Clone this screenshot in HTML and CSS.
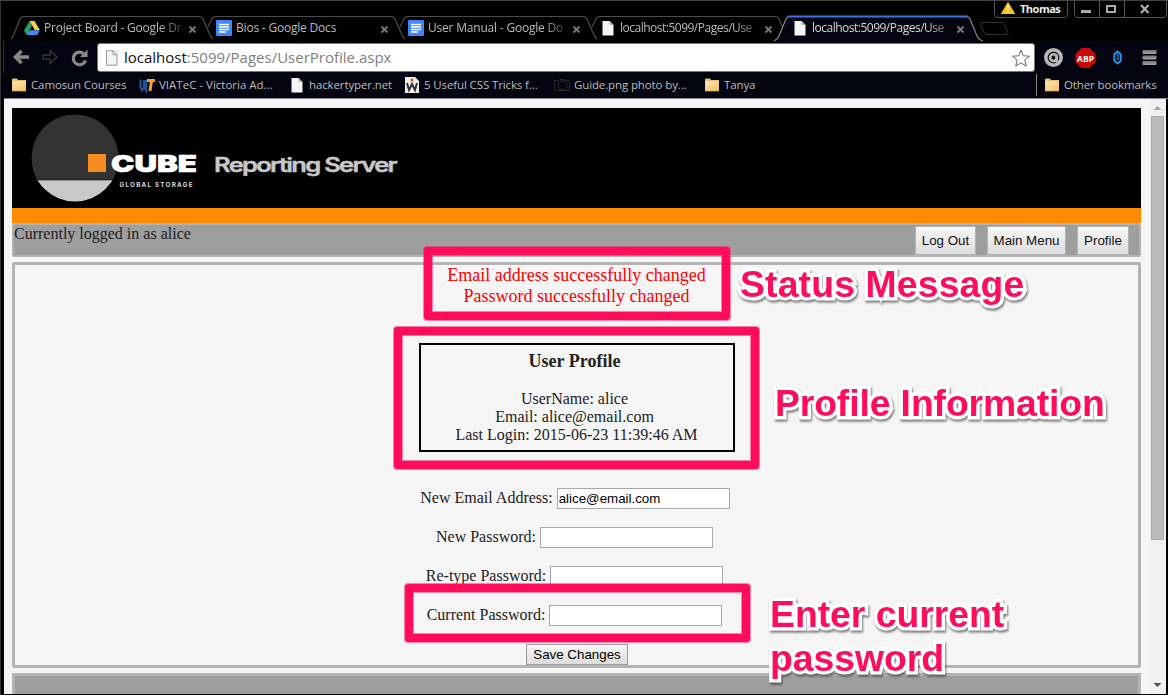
FILE: index.html
```
<!DOCTYPE html>
<html lang="en">
<head>
<meta charset="utf-8">
<title>User Profile</title>
<link rel="stylesheet" href="styles.css">
</head>
<body>
<svg class="defs" width="0" height="0">
  <defs>
    <linearGradient id="folderFill" x1="0" y1="0" x2="1" y2="1"><stop offset="0" stop-color="#ffe9b4"/><stop offset="1" stop-color="#f3bd66"/></linearGradient>
    <linearGradient id="barFill" x1="0" y1="0" x2="0" y2="1"><stop offset="0" stop-color="#707070"/><stop offset="1" stop-color="#a5a5a5"/></linearGradient>
    <symbol id="page" viewBox="0 0 16 16"><path d="M2.500 1h7l4 4v10.500h-11z" fill="#f5f5f5"/><path d="M9.500 1v4h4z" fill="#b8b8b8"/></symbol>
    <symbol id="doc" viewBox="0 0 16 16"><rect width="16" height="16" rx="1" fill="#4285f4"/><path d="M3 4.500h10M3 7h10M3 9.500h10M3 12h7" stroke="#fff" stroke-width="1.300"/></symbol>
    <symbol id="folder" viewBox="0 0 16 16"><path d="M1 2.500q0-1 1-1h4l1 1.500h8v11H1z" fill="#eabf73"/><path d="M1.500 4h13.500v10H1.500z" fill="url(#folderFill)"/><path d="M1 14.200h14" stroke="#c98a32" stroke-width=".7"/></symbol>
    <symbol id="close" viewBox="0 0 9 9"><path d="M1.500 1.500l6 6M7.500 1.500l-6 6" stroke="#777" stroke-width="2"/></symbol>
    <symbol id="tabshape" viewBox="0 0 206 26"><path d="M5 12L9 4Q10 1.500 13 1.500H188Q191 1.500 192 4L199 20Q200 23 202 24" fill="none" stroke="#4d4d4d" stroke-width="1.200"/></symbol>
  </defs>
</svg>
<div class="window">
  <div class="tabstrip">
    <div class="tab"><svg class="outline" viewBox="0 0 206 26"><path d="M0 24Q2 22 3 19L9 4Q10 1.500 13 1.500H188Q191 1.500 192 4L199 20Q200 23 202 24" fill="none" stroke="#4d4d4d" stroke-width="1.200"/></svg>
      <svg class="ico" viewBox="0 0 16 16"><path d="M5.500 1h5l5.300 9h-5z" fill="#ffcf48"/><path d="M5.500 1L0 10.500 2.700 15 8 5.500z" fill="#1fa463"/><path d="M5.300 10.300h10.500L13.200 15H2.700z" fill="#4687f4"/></svg>
      <span class="title fade">Project Board - Google Dr</span><svg class="x"><use href="#close"/></svg></div>
    <div class="tab"><svg class="outline"><use href="#tabshape"/></svg><svg class="ico"><use href="#doc"/></svg><span class="title">Bios - Google Docs</span><svg class="x"><use href="#close"/></svg></div>
    <div class="tab"><svg class="outline"><use href="#tabshape"/></svg><svg class="ico"><use href="#doc"/></svg><span class="title fade">User Manual - Google Do</span><svg class="x"><use href="#close"/></svg></div>
    <div class="tab local"><svg class="outline"><use href="#tabshape"/></svg><svg class="ico"><use href="#page"/></svg><span class="title fade">localhost:5099/Pages/Use</span><svg class="x"><use href="#close"/></svg></div>
    <div class="tab local active"><svg class="outline" viewBox="0 0 206 26"><path d="M-5 26Q-1 24 0 21L7 4Q8 1.500 11 1.500H187Q190 1.500 191 4L198 21Q199 24 204 26" fill="#02040f" stroke="#858585" stroke-width="1.200"/><path d="M9 1.500H189" stroke="#3f72e0" stroke-width="2"/></svg><svg class="ico"><use href="#page"/></svg><span class="title fade">localhost:5099/Pages/Use</span><svg class="x"><use href="#close"/></svg></div>
    <svg class="newtab" viewBox="0 0 32 15"><path d="M4 1.500H24Q26 1.500 27 4L30 12Q30 13.500 28 13.500H9Q7 13.500 6 11L2.500 3Q2 1.500 4 1.500z" fill="none" stroke="#333"/></svg>
    <div class="user"><svg width="14" height="12" viewBox="0 0 14 12"><path d="M7 .5L13.500 11.500H.5z" fill="#fcc21c" stroke="#fcc21c" stroke-linejoin="round"/><path d="M7 3.500v4.200M7 9v1.500" stroke="#fff" stroke-width="1.500"/></svg><span>Thomas</span></div>
    <div class="controls"><span><svg viewBox="0 0 24 17"><path d="M6 10.500h10" stroke="#aaa" stroke-width="3"/></svg></span><span><svg viewBox="0 0 24 17"><rect x="7" y="5" width="8" height="6" fill="none" stroke="#aaa" stroke-width="2"/></svg></span><span class="wide"><svg viewBox="0 0 41 17"><path d="M16 4l7.500 8M23.500 4L16 12" stroke="#aaa" stroke-width="2.300"/></svg></span></div>
  </div>
  <div class="toolbar">
    <svg class="nav" viewBox="0 0 92 32"><path d="M16.500 10L10.500 16l6 6M11 16h13" fill="none" stroke="#898989" stroke-width="3.500"/><path d="M38 14v4h7v4.500l7-6.500-7-6.500V14z" fill="none" stroke="#383838" stroke-width="1.300"/><path d="M78.500 12.500A6.300 6.300 0 1 0 80.500 19.500" fill="none" stroke="#8a8a8a" stroke-width="3.200"/><path d="M82.500 8.500v7.500h-7.500z" fill="#8a8a8a"/></svg>
    <div class="address"><svg class="urlico" viewBox="0 0 16 16"><path d="M2.500.7h7L13 4.200v11H2.500z" fill="#f3f3f3" stroke="#999"/><path d="M9 .7v4h4" fill="none" stroke="#999"/></svg><span class="url">localhost<span>:5099/Pages/UserProfile.aspx</span></span><svg class="star" viewBox="0 0 18 18"><path d="M9 1l2.300 5.800 6.200.4-4.800 3.900 1.600 6.100L9 13.800l-5.300 3.400 1.600-6.100L.5 7.200l6.200-.4z" fill="#fff" stroke="#666"/></svg></div>
    <svg class="ext" viewBox="0 0 132 32"><circle cx="17.500" cy="16.500" r="7.700" fill="#151515" stroke="#b8b8b8" stroke-width="3.600"/><circle cx="17.500" cy="16.700" r="3.400" fill="none" stroke="#b8b8b8" stroke-width="2.600"/><path d="M20.500 13v7.500q1.500 1.500 3-1" fill="none" stroke="#b8b8b8" stroke-width="2.200"/>
      <path d="M45.500 7h8l6 6v8l-6 6h-8l-6-6v-8z" fill="#cc0808"/><text x="41" y="20.500" textLength="17" lengthAdjust="spacingAndGlyphs" class="abp">ABP</text>
      <path d="M81.500 10.500l3.200 2.800v6.400l-3.200 2.800-3.200-2.800v-6.400z" fill="none" stroke="#2196f3" stroke-width="1.900"/><path d="M80.500 13.500h1.500v5h-1.500" fill="none" stroke="#39a5ff" stroke-width="1"/>
      <g fill="url(#barFill)"><rect x="106.500" y="9" width="14" height="4" rx="1"/><rect x="106.500" y="14.500" width="14" height="4" rx="1"/><rect x="106.500" y="20" width="14" height="4" rx="1"/></g></svg>
  </div>
  <div class="bookmarks">
    <div class="bm b1"><svg class="ico"><use href="#folder"/></svg><span>Camosun Courses</span></div>
    <div class="bm b2"><svg class="ico" viewBox="0 0 16 16"><path d="M1.500 2.500v8l1.500 3 2.200-3.500 2 3.500V3M5 3v7" fill="none" stroke="#234f96" stroke-width="2.300"/><path d="M8 3.500h8M12.500 4l-1.500 10" stroke="#f5a02b" stroke-width="3"/></svg><span>VIATeC - Victoria Ad...</span></div>
    <div class="bm b3"><svg class="ico"><use href="#page"/></svg><span>hackertyper.net</span></div>
    <div class="bm b4"><svg class="ico" viewBox="0 0 16 16"><path d="M1 0h10l4 4v12H1z" fill="#eee"/><circle cx="8" cy="3" r="1.700" fill="#e66b25"/><path d="M3 6l2 7 3-6 3 6 2-7" fill="none" stroke="#333" stroke-width="2"/></svg><span>5 Useful CSS Tricks f...</span></div>
    <div class="bm b5"><svg class="ico" viewBox="0 0 16 16"><path d="M.5 3.500h4l1-1h5l1 1h4v10H.5z" fill="none" stroke="#292929"/><circle cx="8.500" cy="8.500" r="4.500" fill="none" stroke="#303030"/></svg><span>Guide.png photo by...</span></div>
    <div class="bm b6"><svg class="ico"><use href="#folder"/></svg><span>Tanya</span></div>
    <div class="bm other"><svg class="ico"><use href="#folder"/></svg><span>Other bookmarks</span></div>
  </div>
  <div class="view">
    <div class="page">
      <div class="banner"><svg width="400" height="100" viewBox="0 0 400 100"><clipPath id="disc"><circle cx="63" cy="50" r="43.500"/></clipPath><g clip-path="url(#disc)"><path d="M19 6h88v66H19z" fill="#333"/><path d="M19 72h88v22H19z" fill="#c8c8c8"/></g><path d="M26 71.800h74" stroke="#202020" stroke-width="1"/><rect x="76" y="46" width="18" height="18" fill="#f68b1f"/><text class="cube" x="99" y="64" textLength="86" lengthAdjust="spacingAndGlyphs">CUBE</text><text class="global" x="107.500" y="79" textLength="73">GLOBAL STORAGE</text><text class="report" x="202" y="64" textLength="182" lengthAdjust="spacingAndGlyphs">Reporting Server</text></svg></div>
      <div class="userbar"><span class="login">Currently logged in as alice</span><button class="lo">Log Out</button><button class="mm">Main Menu</button><button class="pr">Profile</button></div>
      <div class="panel">
        <div class="status">Email address successfully changed<br>Password successfully changed</div>
        <div class="profile"><h3>User Profile</h3><p class="nudge">UserName: alice</p><p class="nudge">Email: alice@email.com</p><p>Last Login: 2015-06-23 11:39:46 AM</p></div>
        <div class="row first"><label>New Email Address:</label><input type="text" value="alice@email.com"></div>
        <div class="row"><label>New Password:</label><input type="password"></div>
        <div class="row"><label>Re-type Password:</label><input type="password"></div>
        <div class="row"><label>Current Password:</label><input type="password"></div>
        <button class="save">Save Changes</button>
      </div>
      <div class="footer"></div>
    </div>
    <div class="scrollbar"><svg width="17" height="17" viewBox="0 0 17 17"><path d="M4.500 11h8l-4-4z" fill="#a3a3a3"/></svg><div class="thumb"></div><svg width="17" height="17" viewBox="0 0 17 17"><path d="M4.500 6h8l-4 4z" fill="#505050"/></svg></div>
  </div>
  <div class="mark m1"></div><div class="mark m2"></div><div class="mark m3"></div>
  <div class="note n1">Status Message</div><div class="note n2">Profile Information</div><div class="note n3">Enter current<br>password</div>
</div>
</body>
</html>
```
FILE: styles.css
```
* { box-sizing: border-box; }
body { margin: 0; overflow: hidden; background: #000; }
.defs { position: absolute; }
.window { position: relative; width: 1168px; height: 695px; overflow: hidden; background: #000; border-top: 1px solid #444; border-left: 1px solid #333; font-family: "Open Sans", "Noto Sans", sans-serif; display: flex; flex-direction: column; }
.tabstrip { height: 40px; flex: none; padding-left: 10px; display: flex; position: relative; }
.tab { position: relative; width: 192px; height: 26px; margin-top: 14px; flex: none; display: flex; align-items: center; padding-left: 13px; }
.tab.local { padding-left: 13px; }
.tab.local .ico { margin-right: 4px; }
.outline { position: absolute; left: 0; top: 0; width: 206px; height: 26px; overflow: visible; }
.ico { width: 16px; height: 16px; flex: none; position: relative; margin-right: 4px; }
.title { position: relative; width: 139px; font-size: 12px; line-height: 18px; letter-spacing: -.2px; color: #b9b9b9; white-space: nowrap; }
.local .title { letter-spacing: -.5px; }
.active .title { color: #d5d5d5; }
.fade { -webkit-mask-image: linear-gradient(to right, #000 115px, rgba(0,0,0,.25) 139px); mask-image: linear-gradient(to right, #000 115px, rgba(0,0,0,.25) 139px); }
.x { width: 9px; height: 9px; position: relative; margin-left: 5px; top: 1px; }
.newtab { width: 32px; height: 15px; margin: 20px 0 0 7px; flex: none; }
.user { position: absolute; left: 993px; top: -1px; width: 74px; height: 18px; border: 1px solid #555; border-radius: 0 0 4px 4px; display: flex; align-items: center; gap: 4px; padding-left: 6px; color: #eee; font-size: 11px; font-weight: 700; letter-spacing: -.5px; }
.user span { padding-left: 1px; position: relative; top: -1px; }
.user svg { margin-top: -2px; }
.controls { position: absolute; left: 1073px; top: -1px; width: 93px; height: 18px; border: 1px solid #555; border-radius: 0 0 4px 4px; display: flex; }
.controls span { width: 25px; border-right: 1px solid #555; }
.controls .wide { width: 41px; border: 0; }
.controls svg { width: 100%; height: 17px; display: block; }
.toolbar { height: 32px; flex: none; background: #02040f; display: flex; margin-left: 2px; border-left: 1px solid #333; }
.nav { width: 92px; height: 32px; margin-left: 1px; flex: none; }
.address { width: 938px; height: 29px; margin-top: 2px; border: 1px solid #777; background: #fff; border-radius: 3px; display: flex; align-items: center; padding-left: 6px; flex: none; }
.urlico { width: 16px; height: 16px; margin-right: 4px; }
.url { font-size: 15px; color: #111; white-space: nowrap; padding-bottom: 1px; }
.url span { color: #808080; }
.star { width: 18px; height: 18px; margin-left: auto; margin-right: 4px; }
.ext { width: 132px; height: 32px; flex: none; margin-left: 1px; }
.abp { font: 700 8.500px "Open Sans", sans-serif; fill: #fff; }
.bookmarks { height: 26px; flex: none; background: #02040f; position: relative; display: flex; align-items: center; padding: 0 0 2px 7px; margin-left: 3px; font-size: 11.500px; color: #bdbdbd; border-bottom: 1px solid #8a8790; }
.bm { display: flex; align-items: center; white-space: nowrap; flex: none; letter-spacing: -.12px; }
.b1 { width: 128px; } .b2 { width: 150px; letter-spacing: 0; } .b3 { width: 115px; } .b4 { width: 150px; } .b5 { width: 150px; } .b6 { width: 60px; }
.other { margin-left: auto; width: 132px; border-left: 1px solid #888; height: 22px; padding-left: 7px; }
.view { flex: none; height: 595px; margin-left: 3px; width: 1162px; display: flex; background: #f5f5f5; overflow: hidden; font-family: "Liberation Serif", "Times New Roman", serif; color: #222; }
.page { width: 1145px; padding: 9px 8px 0; flex: none; }
.banner { height: 115px; background: #000; border-bottom: 15px solid #ff8c00; }
.banner svg { display: block; }
.cube { font: 900 23.500px Inter, sans-serif; fill: #fff; stroke: #fff; stroke-width: .6; }
.global { font: 700 6.300px Inter, sans-serif; fill: #ddd; }
.report { font: 600 19.500px Inter, sans-serif; letter-spacing: -1.300px; fill: #c8c8c8; stroke: #c8c8c8; stroke-width: .4; }
.userbar { height: 34px; border: 2px solid #b3b3b3; border-radius: 2px; background: #9e9e9e; display: flex; padding: 1px 10px 0 0; font-size: 16px; }
.login { line-height: 16px; flex: 1; }
.userbar button { height: 29px; margin-left: 11px; padding: 0; border: 1px solid #b3b3b3; background: linear-gradient(#f5f5f5, #dedede); font: 13.333px "Liberation Sans", Arial, sans-serif; color: #111; }
.lo { width: 61px; } .userbar .mm { width: 79px; } .userbar .pr { width: 52px; }
.panel { height: 406px; margin-top: 5px; border: 3px solid #b3b3b3; border-radius: 2px; display: flex; flex-direction: column; align-items: center; }
.status { color: #f00; font-size: 18px; line-height: 21px; text-align: center; height: 42px; }
.profile { width: 316px; height: 109px; margin-top: 36px; border: 2px solid #000; text-align: center; font-size: 16px; line-height: 18px; flex: none; }
.profile h3 { font-size: 18px; line-height: 20px; margin: 6px 4px 19px 0; }
.profile p { margin: 0; } .profile .nudge { padding-right: 4px; }
.row { display: flex; align-items: center; gap: 4px; height: 21px; margin: 18px 4px 0 0; font-size: 16px; flex: none; }
.row label { padding-bottom: 2px; }
.row.first { margin-top: 36px; margin-right: 3px; }
.row input { width: 173px; height: 21px; border: 1px solid #a9a9a9; padding: 1px; background: #fff; font: 13.333px "Liberation Sans", Arial, sans-serif; color: #000; }
.save { width: 102px; height: 21px; margin-top: 18px; padding: 0 0 0 1px; border: 1px solid #999; background: linear-gradient(#f7f7f7, #dcdcdc); font: 13.333px "Liberation Sans", Arial, sans-serif; color: #000; flex: none; }
.footer { height: 100px; margin-top: 5px; border: 3px solid #b3b3b3; background: #9e9e9e; }
.scrollbar { width: 17px; background: #f1f1f1; display: flex; flex-direction: column; }
.thumb { width: 13px; height: 424px; margin: 0 0 0 2px; background: #bcbcbc; border: 1px solid #a8a8a8; }
.scrollbar svg:last-child { margin-top: auto; }
.mark { position: absolute; border: 8px solid #ff0d5b; border-radius: 3px; box-shadow: 0 0 0 1px rgba(255,13,91,.5), inset 0 0 0 1px rgba(255,13,91,.5); }
.m1 { left: 423px; top: 246px; width: 306px; height: 73px; }
.m2 { left: 393px; top: 326px; width: 365px; height: 142px; }
.m3 { left: 404px; top: 583px; width: 345px; height: 58px; }
.note { position: absolute; font: 700 37.300px/44px "Liberation Sans", Arial, sans-serif; color: #ff0d5b; white-space: nowrap; -webkit-text-stroke: 7px #fff; -webkit-text-stroke-linejoin: round; stroke-linejoin: round; paint-order: stroke fill; filter: drop-shadow(1px 2px 1px rgba(0,0,0,.5)); }
.n1 { left: 739px; top: 261px; letter-spacing: .18px; } .n2 { left: 774px; top: 380px; letter-spacing: -.1px; } .n3 { left: 769px; top: 591px; }
```
